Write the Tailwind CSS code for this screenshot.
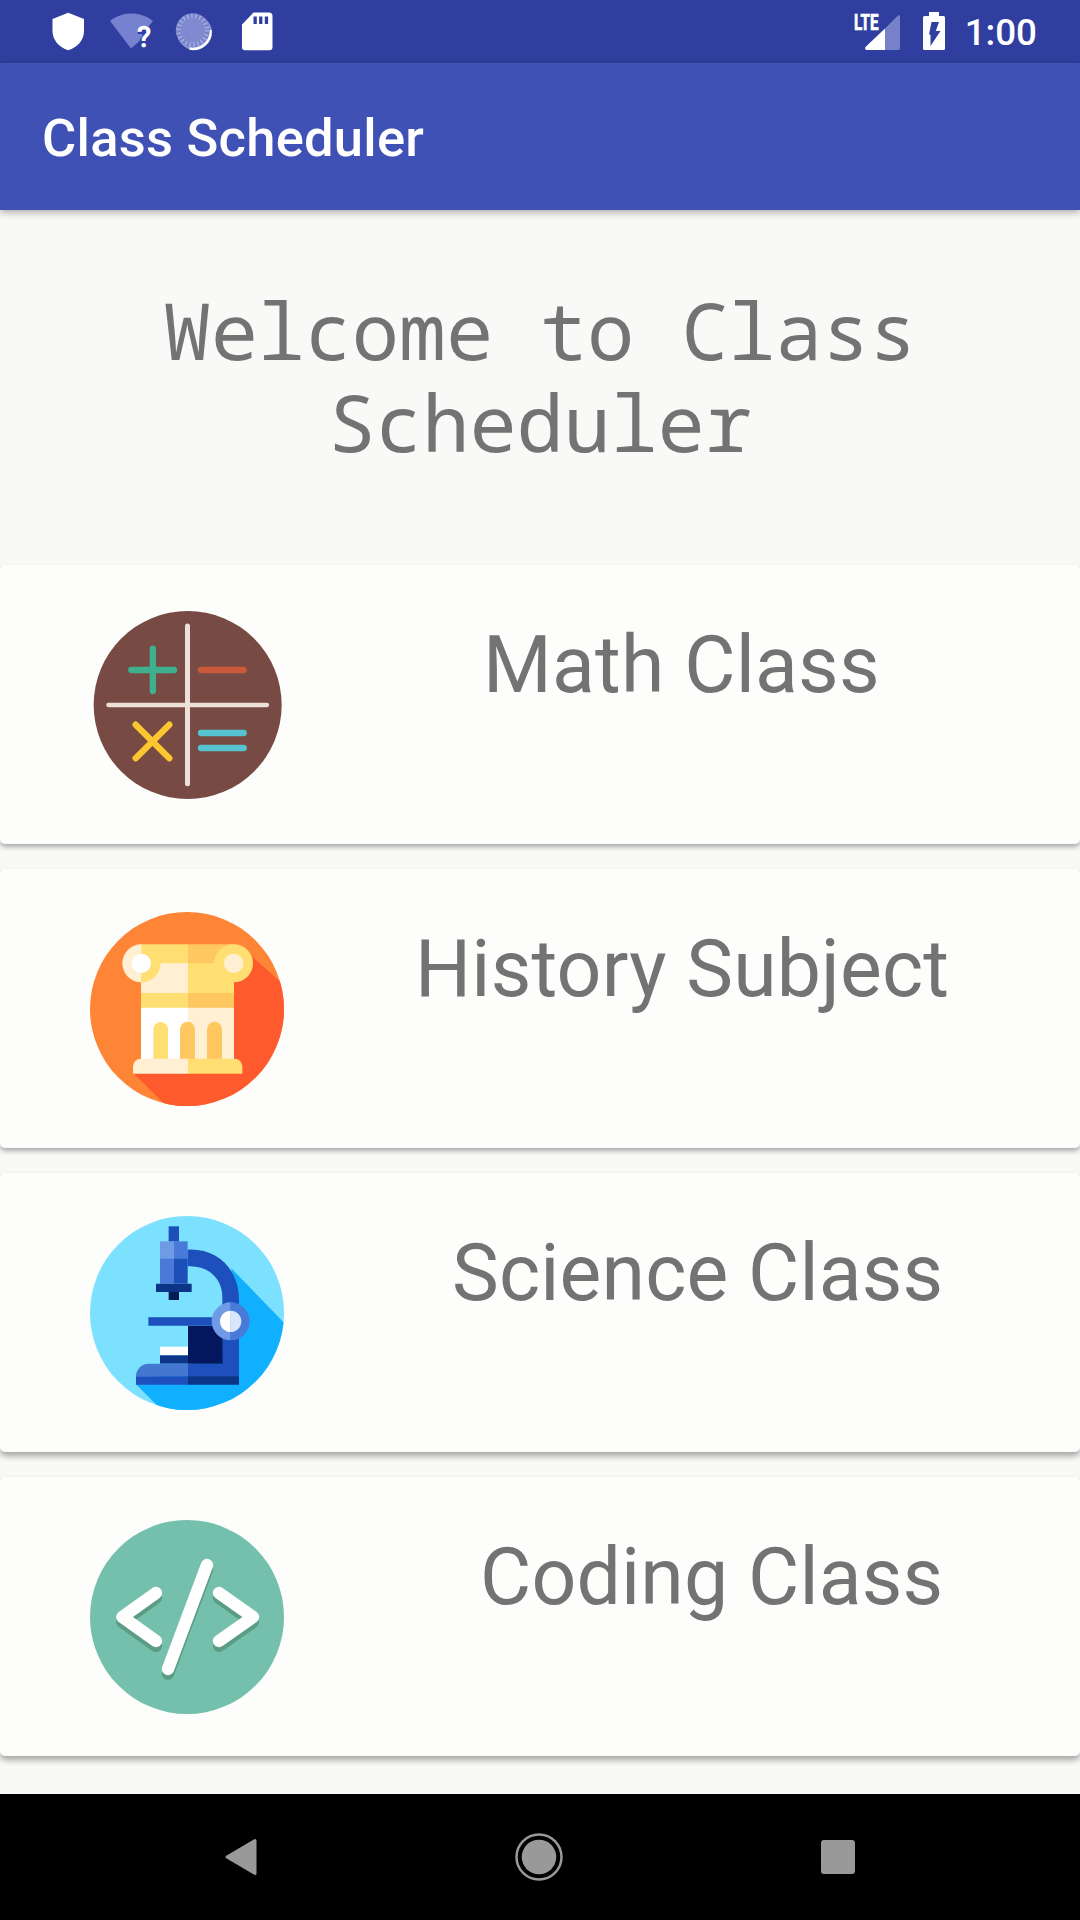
<!DOCTYPE html>
<html lang="en">
<head>
<meta charset="utf-8">
<title>Class Scheduler</title>
<script src="https://cdn.jsdelivr.net/npm/@tailwindcss/browser@4"></script>
</head>
<body class="w-[1080px] h-[1920px] flex flex-col overflow-hidden bg-[#f9f9f8] font-[Roboto,sans-serif]">
  <!-- Status bar -->
  <div class="h-[63px] shrink-0 bg-[#303f9f] flex items-start justify-between pl-[52px] pr-[43px] text-white">
    <div class="flex pt-[12px]">
      <svg class="w-[33px] h-[39px]" viewBox="0 0 33 39"><path fill="#fff" d="M16.2.7 32 7v12c0 9-6.500 16.500-15.800 19.300C7 35.500.5 28 .5 19V7z"/></svg>
      <svg class="w-[44px] h-[45px] ml-[25px] overflow-visible" viewBox="0 0 44 45"><path fill="#7681cf" d="M0 9C12-1 31-1 43 9l-4.500 5.500C33 13 28 16.500 27.500 22H31L33 22.500l-4 7-8 7z"/><text x="27" y="35" font-family="Roboto" font-weight="500" font-size="29" fill="#fff" stroke="#fff" stroke-width=".5">?</text></svg>
      <svg class="w-[38px] h-[39px] ml-[21px]" viewBox="0 0 38 39"><circle cx="19.500" cy="20.500" r="17.500" fill="#8c96d6"/><path d="M35.500 18a17.500 17.500 0 0 1-21 18.500" fill="none" stroke="#fff" stroke-width="2.500"/><circle cx="17.800" cy="18.300" r="17" fill="#7b86cd"/><circle cx="17.800" cy="18.300" r="14" fill="none" stroke="#a9b1e2" stroke-width="5" stroke-dasharray="1.300 2.700"/><circle cx="17.800" cy="18.300" r="12" fill="#7f8ad0"/></svg>
      <svg class="w-[32px] h-[39px] ml-[29px]" viewBox="0 0 32 39"><path fill="#fff" d="M11.500.5H27a3.500 3.500 0 0 1 3.500 3.500v31A3.300 3.300 0 0 1 27 38.200H3A3 3 0 0 1 0 35V12.500z"/><path fill="#303f9f" d="M11.500 4.500h3.300V12h-3.300zM17.100 4.500h3.300V12h-3.300zM22.800 4.500h3.300V12h-3.300z"/></svg>
    </div>
    <div class="flex">
      <svg class="w-[47px] h-[52px]" viewBox="854 0 47 52"><path fill="#7681c9" d="M900 16.500V48.500a1.500 1.500 0 0 1-1.500 1.500H885V28.500L898 15.500q2-1 2 1z"/><path fill="#fff" d="M885 28.500V50H867q-3-.5-1.500-3z"/><text x="854" y="30" font-family="Roboto" font-weight="700" font-size="22" textLength="24.500" lengthAdjust="spacingAndGlyphs" fill="#fff" stroke="#fff" stroke-width=".7">LTE</text></svg>
      <svg class="w-[22px] h-[52px] ml-[22px]" viewBox="923 0 22 52"><path fill="#fff" d="M929 12h10v4h4.500a1.500 1.500 0 0 1 1.500 1.500v31a1.500 1.500 0 0 1-1.500 1.500h-19a1.500 1.500 0 0 1-1.500-1.500v-31a1.500 1.500 0 0 1 1.500-1.500H929z"/><path fill="#303f9f" d="M931.500 22h7.500l-3.200 9h4.700L930.500 46v-11.500H929z"/></svg>
      <div class="ml-[20px] pt-[11px] text-[36.750px] leading-[44px] font-medium">1:00</div>
    </div>
  </div>
  <!-- App bar -->
  <header class="relative h-[147px] shrink-0 bg-[#3f51b5] flex items-center pl-[42px] shadow-[0_2px_8px_rgba(0,0,0,0.35)]">
    <h1 class="text-[52.500px] leading-[62px] pt-[3px] font-medium tracking-[0.25px] text-white">Class Scheduler</h1>
  </header>
  <!-- Content -->
  <main class="flex-1 flex flex-col overflow-hidden">
    <h2 class="h-[355px] shrink-0 pt-[74px] text-center text-[78.750px] leading-[92px] tracking-[-0.200px] text-[#737374] font-['Droid_Sans_Mono','Noto_Sans_Mono','Liberation_Mono',monospace]">Welcome to Class<br>Scheduler</h2>
    <div class="flex flex-col gap-[25px]">
      <section class="h-[279px] rounded-[5px] bg-[#fdfdfc] shadow-[0_3px_5px_rgba(0,0,0,0.32)] flex">
        <svg class="w-[194px] h-[194px] ml-[90px] mt-[43px]" viewBox="60 54 582 582">
          <circle cx="353" cy="345" r="282" fill="#774b44"/>
          <g stroke-linecap="round" fill="none">
            <path stroke="#ece0d8" stroke-width="15" d="M352.500 108V581"/><path stroke="#ece0d8" stroke-width="13" d="M115 345H591"/>
            <path stroke="#3fb08d" stroke-width="19" d="M248.500 176V303M184 240H312"/>
            <path stroke="#cb5a3c" stroke-width="19" d="M393 240H521"/>
            <path stroke="#fbc62f" stroke-width="19" d="M197 404 298 505M298 404 197 505"/>
            <path stroke="#57c2d0" stroke-width="19" d="M393 429H521M393 474H521"/>
          </g>
        </svg>
        <h3 class="ml-[199px] mt-[54px] text-[78.750px] leading-[92px] tracking-[0.200px] text-[#737374]">Math Class</h3>
      </section>
      <section class="h-[279px] rounded-[5px] bg-[#fdfdfc] shadow-[0_3px_5px_rgba(0,0,0,0.32)] flex">
        <svg class="w-[194px] h-[194px] ml-[90px] mt-[43px]" viewBox="60 66 582 582">
          <clipPath id="history-disc"><circle cx="351" cy="357" r="291"/></clipPath>
          <g clip-path="url(#history-disc)">
            <path fill="#ff8536" d="M60 66h582v582H60z"/>
            <path fill="#ff5a2d" d="M535 190 642 285V648H290L190 550 300 400z"/>
          </g>
          <path fill="#fff" d="M213 350h141v160H213z"/><path fill="#ffefd3" d="M354 350h138v160H354z"/>
          <path fill="#ffefd3" d="M213 215h141v95H213z"/><path fill="#ffdf72" d="M354 215h138v95H354z"/>
          <path fill="#ffdf72" d="M213 309h141v44H213z"/><path fill="#ffc760" d="M354 309h138v44H354z"/>
          <path fill="#ffdf72" d="M213 163h141v57H272a58 58 0 0 1-59 57z"/>
          <path fill="#ffefd3" d="M214 163a57 57 0 0 0 0 114z"/>
          <circle cx="214" cy="220" r="29" fill="#fff"/>
          <path fill="#ffc760" d="M354 163h138v57H354z"/>
          <path fill="#ffdf72" d="M492 163a57 57 0 1 1 0 114H432V220a60 57 0 0 1 60-57z"/>
          <circle cx="491" cy="220" r="29" fill="#ffefd3"/>
          <path fill="#ffdf72" d="M250 507V418a22 22 0 0 1 44 0v89z"/>
          <path fill="#ffc760" d="M330 507V418a22.500 22.500 0 0 1 45 0v89zM411 507V418a22.500 22.500 0 0 1 45 0v89z"/>
          <path fill="#ffefd3" d="M354 506H212a23 23 0 0 0-23 23v22h165z"/><path fill="#ffdf72" d="M354 506H494a23 23 0 0 1 23 23v22H354z"/>
        </svg>
        <h3 class="ml-[131px] mt-[54px] text-[78.750px] leading-[92px] tracking-[0.150px] text-[#737374]">History Subject</h3>
      </section>
      <section class="h-[279px] rounded-[5px] bg-[#fdfdfc] shadow-[0_4px_6px_rgba(0,0,0,0.34)] flex">
        <svg class="w-[194px] h-[194px] ml-[90px] mt-[43px]" viewBox="60 48 582 582">
          <clipPath id="science-disc"><circle cx="351" cy="339" r="291"/></clipPath>
          <g clip-path="url(#science-disc)">
            <path fill="#7ce0ff" d="M60 48h582v582H60z"/>
            <path fill="#10b0ff" d="M484 205 642 368V630H275L198 553 350 500 500 420z"/>
          </g>
          <path fill="#1d4fb8" d="M296 79h31v46H296z"/>
          <path fill="#6f9be6" d="M270 124h42v51H270z"/><path fill="#4a7ad8" d="M312 124h41v51H312z"/>
          <path fill="#4a7ad8" d="M270 175h42v76H270z"/><path fill="#1d4fb8" d="M312 175h41v76H312z"/>
          <path fill="#0c3588" d="M258 251H365v25H258z"/><path fill="#051c50" d="M296 276h31v24H296z"/>
          <path fill="#1d50bc" d="M353 149c90-5 154 60 154 150V530H353V491H457V290c0-55-44-95-104-91z"/>
          <path fill="#04175e" d="M354 377H458V491H354z"/>
          <path fill="#1d50bc" d="M235 352H440v25H235z"/>
          <path fill="#fff" d="M270 440h84v26H270z"/><path fill="#0c3588" d="M270 466h84v25H270z"/>
          <path fill="#4278d0" d="M354 491H236a38 38 0 0 0-38 38h156z"/><path fill="#1d50bc" d="M198 529h156v25H198z"/><path fill="#0c3588" d="M354 529h153v25H354z"/>
          <path fill="#6f9be6" d="M482 307a57 57 0 0 0 0 114z"/><path fill="#4a7ad8" d="M482 307a57 57 0 0 1 0 114z"/>
          <path fill="#fff" d="M482 332a32 32 0 0 0 0 64z"/><path fill="#d8e7fb" d="M482 332a32 32 0 0 1 0 64z"/>
        </svg>
        <h3 class="ml-[168px] mt-[54px] text-[78.750px] leading-[92px] tracking-[0.150px] text-[#737374]">Science Class</h3>
      </section>
      <section class="h-[279px] rounded-[5px] bg-[#fdfdfc] shadow-[0_4px_6px_rgba(0,0,0,0.34)] flex">
        <svg class="w-[194px] h-[194px] ml-[90px] mt-[43px]" viewBox="60 60 582 582">
          <circle cx="351" cy="351" r="291" fill="#75c0ac"/>
          <g fill="none" stroke-width="37" stroke-linecap="round" stroke-linejoin="round">
            <path stroke="#5b9c84" d="M258 293 157 366 258 438M447 293 549 366 447 438M411 209 294 521"/>
            <path stroke="#fff" d="M258 279 157 351 258 423M447 279 549 351 447 423M411 195 294 507"/>
          </g>
        </svg>
        <h3 class="ml-[196px] mt-[54px] text-[78.750px] leading-[92px] tracking-[0.150px] text-[#737374]">Coding Class</h3>
      </section>
    </div>
  </main>
  <!-- Navigation bar -->
  <nav class="h-[126px] shrink-0 bg-black flex items-center justify-between pl-[225px] pr-[225px]">
    <svg class="w-[32px] h-[38px]" viewBox="0 0 32 38"><path fill="#999" stroke="#999" stroke-width="3" stroke-linejoin="round" d="M30 2.500v33L2 19z"/></svg>
    <svg class="w-[48px] h-[48px]" viewBox="0 0 48 48"><circle cx="24" cy="24" r="22.500" fill="none" stroke="#999" stroke-width="2.500"/><circle cx="24" cy="24" r="17.300" fill="#999"/></svg>
    <div class="w-[34px] h-[34px] rounded-[3px] bg-[#999]"></div>
  </nav>
</body>
</html>
